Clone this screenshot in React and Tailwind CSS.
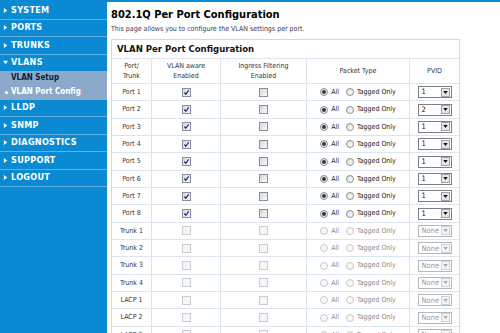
import React from "react";

const FONT = "font-['DejaVu_Sans_Condensed','DejaVu_Sans',sans-serif] [font-stretch:condensed]";

const ROWS = [
  ...Array.from({ length: 8 }, (_, i) => ({
    name: `Port ${i + 1}`,
    on: true,
    pvid: i === 1 ? "2" : "1",
  })),
  ...["Trunk 1", "Trunk 2", "Trunk 3", "Trunk 4", "LACP 1", "LACP 2", "LACP 3"].map(
    (name) => ({ name, on: false, pvid: "None" }),
  ),
];

function Arrow({ down }) {
  return (
    <svg viewBox="0 0 6 6" className="w-[5px] h-[5px] shrink-0" fill="white">
      {down ? <polygon points="0,1 6,1 3,5" /> : <polygon points="1,0 5,3 1,6" />}
    </svg>
  );
}

function NavItem({ label, down, line = true, h = "h-[17.5px]" }) {
  return (
    <div
      className={`${h} flex items-center gap-[3px] pl-[3px] ${
        line ? "border-b border-[#5fb2e3]" : ""
      }`}
    >
      <Arrow down={down} />
      <span className="text-white font-bold text-[9px] tracking-[0.3px]">{label}</span>
    </div>
  );
}

function Checkbox({ checked, disabled }) {
  return (
    <span
      className={`inline-flex items-center justify-center w-[9px] h-[9px] border ${
        disabled
          ? "border-[#c9cdd2] bg-[#f6f6f6]"
          : "border-[#8a8f96] bg-gradient-to-br from-[#d8d8d8] to-[#f8f8f8]"
      }`}
    >
      {checked && (
        <svg viewBox="0 0 8 8" className="w-[7px] h-[7px]" fill="none" stroke="#1a2f9a" strokeWidth={1.4}>
          <polyline points="1.5,4 3.2,6 6.5,1.5" />
        </svg>
      )}
    </span>
  );
}

function Radio({ checked, disabled }) {
  return (
    <span
      className={`inline-flex items-center justify-center w-[8px] h-[8px] rounded-full border ${
        disabled ? "border-[#c6c9cc] bg-[#f7f7f7]" : "border-[#8c8f93] bg-gradient-to-br from-[#dcdcdc] to-white"
      }`}
    >
      {checked && <span className="w-[4px] h-[4px] rounded-full bg-[#2d3a4a]" />}
    </span>
  );
}

function Select({ value, disabled }) {
  return (
    <div
      className={`w-[34px] h-[12px] flex items-center justify-between border bg-white ${
        disabled ? "border-[#b5b8bb]" : "border-[#7c7f84]"
      }`}
    >
      <span
        className={`pl-[3px] text-[7.5px] leading-none ${disabled ? "text-[#9a9a9a] pl-[2px]" : "text-[#111]"}`}
      >
        {value}
      </span>
      <span
        className={`w-[9px] h-[9px] mr-[1px] flex items-center justify-center border ${
          disabled ? "border-[#d0d2d4] bg-[#f4f4f4]" : "border-[#a0a4a8] bg-[#e6e6e6]"
        }`}
      >
        <svg viewBox="0 0 6 4" className="w-[5px] h-[3px]" fill={disabled ? "#a8a8a8" : "#111"}>
          <polygon points="0,0 6,0 3,4" />
        </svg>
      </span>
    </div>
  );
}

const COLS = ["w-[40px]", "w-[69px]", "w-[86px]", "w-[103px]", "w-[49px]"];

export default function App() {
  return (
    <div className={`w-[500px] h-[333px] overflow-hidden flex bg-white ${FONT}`}>
      {/* Sidebar */}
      <aside className="w-[107px] shrink-0 bg-[#0a8ad2] pt-[2px]">
        <NavItem label="SYSTEM" />
        <NavItem label="PORTS" />
        <NavItem label="TRUNKS" />
        <NavItem label="VLANS" down line={false} h="h-[16px]" />
        <div className="bg-[#8ca9c9]">
          <div className="h-[14.5px] flex items-center pl-[11px] text-[8px] font-bold text-[#0d1d3c]">
            VLAN Setup
          </div>
          <div className="h-[14.5px] flex items-center pl-[5px] gap-[3px] text-[8px] font-bold text-white">
            <span className="w-[3px] h-[3px] rounded-full bg-white" />
            VLAN Port Config
          </div>
        </div>
        <NavItem label="LLDP" />
        <NavItem label="SNMP" />
        <NavItem label="DIAGNOSTICS" />
        <NavItem label="SUPPORT" />
        <NavItem label="LOGOUT" />
      </aside>

      {/* Main */}
      <main className="flex-1 min-w-0">
        <div className="h-[2px] bg-[#0a8ad2]" />
        <div className="pl-[4px] pt-[6px]">
          <h1 className="text-[11px] leading-[14px] font-bold text-black">
            802.1Q Per Port Configuration
          </h1>
          <p className="mt-[1px] text-[7px] leading-[12px] text-[#3b3a4e]">
            This page allows you to configure the VLAN settings per port.
          </p>

          <div className="mt-[4px] w-[349px] border border-[#cfdae8]">
            <div className="h-[19px] border-b border-[#dbe4ef] flex items-center pl-[5px] text-[9.5px] font-bold text-[#111]">
              VLAN Per Port Configuration
            </div>

            {/* Column headers */}
            <div className="flex h-[25px] border-b border-[#dbe4ef] text-[7px] leading-[10px] text-[#333]">
              {[
                ["Port/", "Trunk"],
                ["VLAN aware", "Enabled"],
                ["Ingress Filtering", "Enabled"],
                ["Packet Type"],
                ["PVID"],
              ].map((lines, i) => (
                <div
                  key={i}
                  className={`${COLS[i]} shrink-0 flex flex-col items-center justify-center text-center ${
                    i < 4 ? "border-r border-[#dbe4ef]" : ""
                  }`}
                >
                  {lines.map((l) => (
                    <span key={l}>{l}</span>
                  ))}
                </div>
              ))}
            </div>

            {/* Rows */}
            {ROWS.map((row) => (
              <div
                key={row.name}
                className="flex h-[17.35px] border-b border-[#dbe4ef] text-[7px] text-[#3a3333]"
              >
                <div className={`${COLS[0]} shrink-0 flex items-center justify-center border-r border-[#dbe4ef]`}>
                  {row.name}
                </div>
                <div className={`${COLS[1]} shrink-0 flex items-center justify-center border-r border-[#dbe4ef]`}>
                  <Checkbox checked={row.on} disabled={!row.on} />
                </div>
                <div className={`${COLS[2]} shrink-0 flex items-center justify-center border-r border-[#dbe4ef]`}>
                  <Checkbox disabled={!row.on} />
                </div>
                <div className={`${COLS[3]} shrink-0 flex items-center justify-center gap-[3px] border-r border-[#dbe4ef]`}>
                  <Radio checked={row.on} disabled={!row.on} />
                  <span className={`mr-[4px] ${row.on ? "text-[#222]" : "text-[#8a8a8a]"}`}>All</span>
                  <Radio disabled={!row.on} />
                  <span className={row.on ? "text-[#222]" : "text-[#8a8a8a]"}>Tagged Only</span>
                </div>
                <div className={`${COLS[4]} shrink-0 flex items-center justify-center`}>
                  <Select value={row.pvid} disabled={!row.on} />
                </div>
              </div>
            ))}
          </div>
        </div>
      </main>
    </div>
  );
}
